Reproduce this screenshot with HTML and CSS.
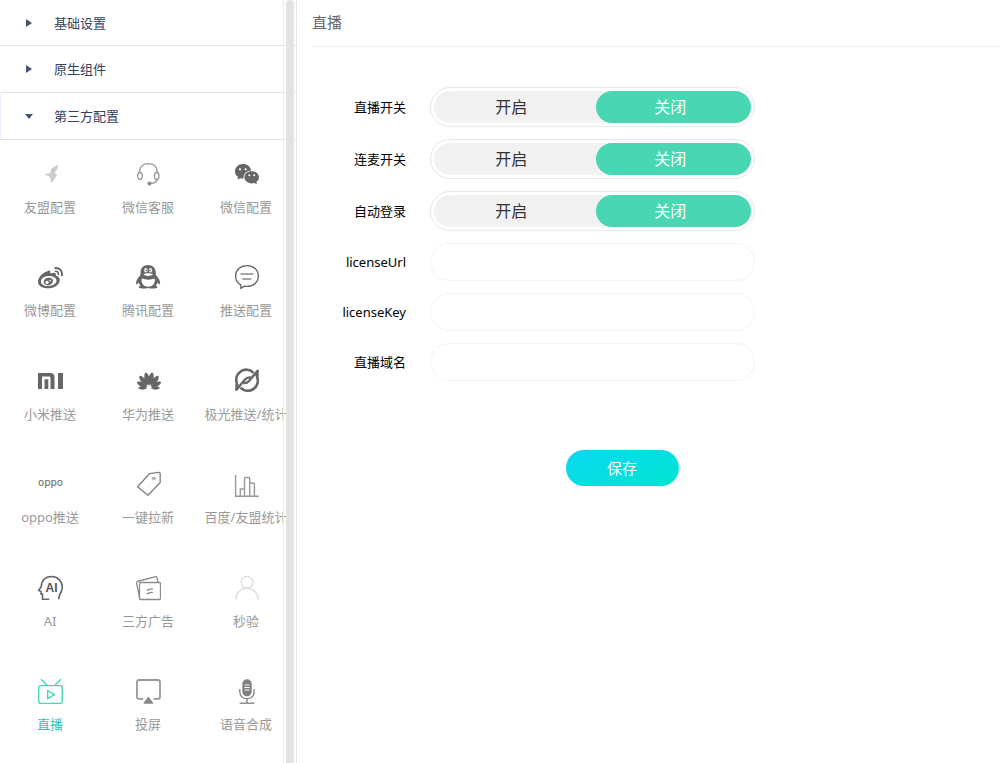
FILE: index.html
```html
<!DOCTYPE html>
<html lang="zh-CN">
<head>
<meta charset="utf-8">
<meta name="viewport" content="width=device-width, initial-scale=1">
<title>直播</title>
<link rel="stylesheet" href="styles.css">
</head>
<body>
<div class="layout">
  <nav class="sidebar">
    <button class="group" type="button" aria-expanded="false"><span class="caret"></span>基础设置</button>
    <button class="group" type="button" aria-expanded="false"><span class="caret"></span>原生组件</button>
    <button class="group group-open" type="button" aria-expanded="true"><span class="caret"></span>第三方配置</button>
    <div class="tiles">
      <a class="tile" href="#">
        <svg class="icon" viewBox="0 0 26 26"><path fill="#ccc" d="M21.500 3.500 14.500 7.500 13.500 12 7 13.300 12 15.300 13.500 17.500 14.500 22 17 19 20 14 17.500 12 20 8.500Z"/></svg>友盟配置</a>
      <a class="tile" href="#">
        <svg class="icon" viewBox="0 0 26 26"><g fill="none" stroke="#999" stroke-width="1.300"><path d="M4.400 12C4.400 5.500 8 2.600 13.400 2.600S22.300 5.500 22.300 12M22.300 18.500C21.800 21 19 22.300 15 22.500"/><ellipse cx="5" cy="15" rx="2.300" ry="3.500"/><ellipse cx="21.700" cy="15" rx="2.300" ry="3.500"/></g><ellipse cx="14.500" cy="22.500" rx="2" ry="1.900" fill="#888"/></svg>微信客服</a>
      <a class="tile" href="#">
        <svg class="icon" viewBox="0 0 26 26"><g fill="#666"><path d="M10 3C5.300 3 2 6.300 2 10.400c0 2.500 1.200 4.300 3.100 5.700L4.400 18.600 7.500 17.200c.9.3 2 .4 3.100.4C10 12.800 14 9.600 18.200 9.500 17.600 5.700 14.200 3 10 3Z"/><path d="M18.700 10.300c-4.200 0-7.300 2.700-7.300 6s3.100 6.100 7.300 6.100c.9 0 1.700-.1 2.500-.4l2.800 1.300-.7-2.300c1.700-1.200 2.700-2.700 2.700-4.700 0-3.300-3.200-6-7.300-6Z"/></g><g fill="#fff"><circle cx="7" cy="8.300" r="1.100"/><circle cx="12.700" cy="8.300" r="1.100"/><circle cx="16.300" cy="14.300" r="1"/><circle cx="21.200" cy="14.300" r="1"/></g></svg>微信配置</a>

      <a class="tile" href="#">
        <svg class="icon" viewBox="0 0 26 26"><path fill="#666" fill-rule="evenodd" d="M10 7.500C12 5.500 14 6.500 13.200 9.700c3-1.300 6.500-1.500 5.600 1.800 2.700.8 4 2.200 4 4.400 0 4.500-5.600 8.400-12 8.400C5 24.300 1 21.500 1 17.700 1 14 5.500 8.500 10 7.500ZM11.200 12C6.700 12.300 3.700 14.800 3.900 17.700s3.600 4.700 8.100 4.300 7.800-3 7.500-5.700-4-4.600-8.300-4.300Z"/><path fill="#666" fill-rule="evenodd" d="M11.500 13.700c-3.200.3-5.200 2.500-4.700 4.800s3 3.200 5.600 2.500 4.100-3 3.400-5-2.300-2.500-4.300-2.300ZM10 16.700a1.700 1.700 0 1 0 .1 3.400 1.700 1.700 0 0 0-.1-3.400Zm3-.9a.8.8 0 1 0 0 1.600.8.8 0 0 0 0-1.600Z"/><g fill="none" stroke="#666" stroke-linecap="round"><path stroke-width="1.900" d="M18.300 4c4.300-.3 7.500 3 6.500 7.300"/><path stroke-width="1.600" d="M18.500 7.300c2-.1 3.300 1.300 2.900 3.200"/></g></svg>微博配置</a>
      <a class="tile" href="#">
        <svg class="icon" viewBox="0 0 26 26"><path fill="#666" d="M13 1C8.500 1 5.500 4 5.500 8.500v2.600C3 13.500 1.200 16.500 1 19.300c0 1.500 1 1.300 2.600-.8.4 1.200 1 2.200 2 3.100-1.600.8-2 1.500-1.600 2.200.5.900 6.400 1.200 9 .2 2.700 1 8.700.7 9.300-.2.400-.7-.1-1.400-1.600-2.200 1-.9 1.600-1.900 2-3.100 1.500 2.100 2.500 2.300 2.500.8-.1-2.800-1.800-5.800-4.400-8.200V8.500C20.800 4 17.600 1 13 1Z"/><path fill="#fff" d="M6.700 14.500c4 1.500 9 1.500 13 0 .8 4-1.500 8.300-6.500 8.300s-7.200-4.300-6.500-8.300Z"/><g fill="#fff"><ellipse cx="10.900" cy="6.200" rx="1.600" ry="2.200"/><ellipse cx="15.500" cy="6.200" rx="1.600" ry="2.200"/><path d="M8.500 10.300c2.500-1.300 7-1.300 9.500 0-2 2.100-7.500 2.100-9.500 0Z"/></g><circle cx="11.300" cy="6.400" r=".8" fill="#666"/><circle cx="15" cy="6.400" r=".8" fill="#666"/></svg>腾讯配置</a>
      <a class="tile" href="#">
        <svg class="icon" viewBox="0 0 26 26"><g fill="none" stroke="#666" stroke-width="1.300" stroke-linejoin="round"><path d="M14 1.600C7.300 1.600 2.600 6 2.600 12c0 4 2 7.100 5.200 8.900v3.500l3.600-2.300c.8.2 1.700.3 2.600.3 6.700 0 11.400-4.500 11.400-10.400S20.700 1.600 14 1.600Z"/><path stroke="#888" d="M7.500 10h13M9.300 15h9"/></g></svg>推送配置</a>

      <a class="tile" href="#">
        <svg class="icon" viewBox="0 0 26 26"><path fill="#666" d="M1 5h12.500c2.500 0 4 1.500 4 4v12h-4V10.300c0-1.300-.5-1.900-1.900-1.900H5V21H1ZM7.500 11.300h3.800V21H7.500ZM21 5h5v16h-5Z"/></svg>小米推送</a>
      <a class="tile" href="#">
        <svg class="icon" viewBox="0 0 26 26"><defs><path id="petal" d="M0-2.500C-3-7-3.300-12-.8-15.500Q0-16 .8-15.500C3.300-12 3-7 0-2.500Z"/></defs><g fill="#666" transform="translate(14 20)"><use href="#petal" transform="rotate(-12)"/><use href="#petal" transform="rotate(12)"/><use href="#petal" transform="rotate(-38) scale(.96)"/><use href="#petal" transform="rotate(38) scale(.96)"/><use href="#petal" transform="rotate(-64) scale(.84)"/><use href="#petal" transform="rotate(64) scale(.84)"/><use href="#petal" transform="rotate(-90) scale(.68)"/><use href="#petal" transform="rotate(90) scale(.68)"/></g></svg>华为推送</a>
      <a class="tile" href="#">
        <svg class="icon" viewBox="0 0 26 26"><g fill="none" stroke="#666"><path stroke-width="2.600" d="M4 15.500A10 10 0 0 1 20.500 4.800M24 8.800A10 10 0 0 1 7.500 19.600"/><path stroke-width="2.400" d="M2.800 22.500 12 11.500Q14.500 8.800 17.500 9.500M25.200 2 16 13Q13.500 15.700 10.500 15"/></g><path fill="#666" d="M2.300 16 4.500 14.500 6 17.500 2.300 23ZM25.700 8.500 23.500 10 22 7 25.700 1.500Z"/></svg>极光推送/统计</a>

      <a class="tile" href="#">
        <svg class="icon" viewBox="0 0 26 26"><text class="logo-oppo" x="13.500" y="15" text-anchor="middle">oppo</text></svg>oppo推送</a>
      <a class="tile" href="#">
        <svg class="icon" viewBox="0 0 26 26"><g fill="none" stroke="#808080" stroke-width="1.300" stroke-linejoin="round"><path d="M14.500 2.700 23.500 1.400Q25.200 1.300 25.200 3V11.500L13 24.300 2.500 15.700Z"/><ellipse cx="18.900" cy="7.300" rx="1.500" ry="1" stroke="#aaa"/></g></svg>一键拉新</a>
      <a class="tile" href="#">
        <svg class="icon" viewBox="0 0 26 26"><g fill="none" stroke="#999" stroke-width="1.400"><path d="M2.600 4V25.300H26M7.300 25V18h4.200M11.500 25V7.500q0-1 1-1h3.200q1 0 1 1V25M16.700 12h3.700q1 0 1 1V25"/></g></svg>百度/友盟统计</a>

      <a class="tile" href="#">
        <svg class="icon" viewBox="0 0 26 26"><path fill="none" stroke="#666" stroke-width="1.600" d="M12.300 24.300H5.500V19H4V16.500L1.700 15.500 4.300 11.500C4.300 5.500 8.500 1.500 14.300 1.500c6.500 0 11 4.700 11 10.500 0 3.500-1.300 5.500-2.500 7.500-.8 1.500-1 3-1 4.800"/><text class="logo-ai" x="14.500" y="17" text-anchor="middle">AI</text></svg>AI</a>
      <a class="tile" href="#">
        <svg class="icon" viewBox="0 0 26 26"><g fill="none" stroke="#8c8c8c" stroke-width="1.300" stroke-linejoin="round"><rect x="4.500" y="7.500" width="21" height="17" rx="1"/><path d="M4.500 22.500 1.500 7.800Q1.300 6.800 2.200 6.500L20.500 1.600Q21.600 1.400 21.900 2.300L23.300 7.500M11.500 15c2 .8 3-2 6.500-1M11.500 18.500c2 .8 3-2 6.500-1"/></g></svg>三方广告</a>
      <a class="tile" href="#">
        <svg class="icon" viewBox="0 0 26 26"><g fill="none" stroke="#ddd" stroke-width="1.300"><circle cx="14" cy="7.300" r="5.900"/><path d="M2.600 24.800C3 18 7.500 13.300 14 13.300S25 18 25.400 24.800"/></g></svg>秒验</a>

      <a class="tile tile-active" href="#" aria-current="page">
        <svg class="icon" viewBox="0 0 26 26"><g fill="none" stroke="#49d6b3" stroke-width="1.400" stroke-linejoin="round"><rect x="1.700" y="7.600" width="23.600" height="17.800" rx="2"/><path d="M4 1.300 10.500 7.500M24 1.300 17.500 7.500M10.700 12.500V20.700L17.500 16.600Z"/></g></svg>直播</a>
      <a class="tile" href="#">
        <svg class="icon" viewBox="0 0 26 26"><path fill="none" stroke="#999" stroke-width="1.800" d="M8.300 20.800H4q-2 0-2-2V4q0-2 2-2H23q2 0 2 2V18.800q0 2-2 2H18.500"/><path fill="#888" d="M13.400 18.500 18 24.500V25.700H8.800V24.500Z"/></svg>投屏</a>
      <a class="tile" href="#">
        <svg class="icon" viewBox="0 0 26 26"><rect x="9.300" y="1.300" width="9.400" height="17" rx="4.700" fill="#808080"/><g fill="none" stroke="#808080" stroke-width="1.300"><path d="M6.800 11V13.500c0 4.500 3 7.200 7.200 7.200s7.200-2.700 7.200-7.200V11M14 20.700V25"/><path d="M6.700 25.200H21.300"/><path stroke="#fff" stroke-width="1" d="M11.500 7h5M11.500 9.500h5M11.500 12h5"/></g></svg>语音合成</a>
    </div>
    <div class="scroll-thumb"></div>
  </nav>

  <main class="content">
    <h1 class="title">直播</h1>
    <form class="form">
      <div class="row" role="radiogroup" aria-labelledby="live-label">
        <span class="label" id="live-label">直播开关</span>
        <div class="toggle">
          <div class="track">
            <input class="radio" type="radio" name="live" id="live-on"><label class="option" for="live-on">开启</label>
            <input class="radio" type="radio" name="live" id="live-off" checked><label class="option" for="live-off">关闭</label>
          </div>
        </div>
      </div>
      <div class="row" role="radiogroup" aria-labelledby="mic-label">
        <span class="label" id="mic-label">连麦开关</span>
        <div class="toggle">
          <div class="track">
            <input class="radio" type="radio" name="mic" id="mic-on"><label class="option" for="mic-on">开启</label>
            <input class="radio" type="radio" name="mic" id="mic-off" checked><label class="option" for="mic-off">关闭</label>
          </div>
        </div>
      </div>
      <div class="row" role="radiogroup" aria-labelledby="login-label">
        <span class="label" id="login-label">自动登录</span>
        <div class="toggle">
          <div class="track">
            <input class="radio" type="radio" name="login" id="login-on"><label class="option" for="login-on">开启</label>
            <input class="radio" type="radio" name="login" id="login-off" checked><label class="option" for="login-off">关闭</label>
          </div>
        </div>
      </div>
      <div class="row">
        <label class="label" for="license-url">licenseUrl</label>
        <input class="field" type="text" id="license-url">
      </div>
      <div class="row">
        <label class="label" for="license-key">licenseKey</label>
        <input class="field" type="text" id="license-key">
      </div>
      <div class="row">
        <label class="label" for="domain">直播域名</label>
        <input class="field" type="text" id="domain">
      </div>
      <button class="save" type="submit">保存</button>
    </form>
  </main>
</div>
</body>
</html>
```
FILE: styles.css
```css
* {
  box-sizing: border-box;
}

body {
  margin: 0;
  background: #fff;
  color: #000;
  font-family: "Noto Sans", "Noto Sans CJK SC", sans-serif;
  font-size: 13px;
  font-weight: 400;
  line-height: 20px;
}

button,
input {
  font: inherit;
}

.layout {
  display: flex;
  min-height: 100vh;
}

.sidebar {
  position: relative;
  flex: none;
  width: 297px;
  border-right: 1px solid #e5e5e5;
  overflow: hidden;
}

.sidebar::before {
  content: "";
  position: absolute;
  top: 0;
  bottom: 0;
  left: 283px;
  width: 1px;
  background: #eee;
}

.group {
  display: flex;
  align-items: center;
  width: 100%;
  height: 47px;
  padding: 0 0 0 24px;
  border: 0;
  border-left: 1px solid #fff;
  border-bottom: 1px solid #e2e2e2;
  background: none;
  color: #33415f;
  text-align: left;
}

.group:first-child {
  height: 46px;
}

.group-open {
  border-left-color: #e8f1ff;
}

.caret {
  width: 6px;
  margin: 0 22px 0 1px;
  border-top: 4px solid transparent;
  border-bottom: 4px solid transparent;
  border-left: 6px solid #43546f;
}

.group-open .caret {
  width: 8px;
  margin: 0 21px 0 0;
  border-top: 5px solid #43546f;
  border-right: 4px solid transparent;
  border-bottom: 0;
  border-left: 4px solid transparent;
}

.tiles {
  display: grid;
  grid-template-columns: repeat(3, 98px);
  grid-template-rows: repeat(3, 103px 104px);
  padding-left: 1px;
}

.tile {
  display: flex;
  flex-direction: column;
  align-items: center;
  gap: 10px;
  padding-top: 21px;
  color: #999;
  text-decoration: none;
  white-space: nowrap;
}

.tile-active {
  color: #2cc5b4;
}

.icon {
  flex: none;
  width: 26px;
  height: 26px;
}

.logo-oppo {
  fill: #666;
  font-family: "DejaVu Sans", sans-serif;
  font-size: 10px;
}

.logo-ai {
  fill: #555;
  font-family: "Liberation Sans", sans-serif;
  font-size: 12px;
  font-weight: 700;
}

.scroll-thumb {
  position: absolute;
  top: 0;
  bottom: 0;
  right: 2px;
  width: 8px;
  border-radius: 4px 4px 0 0;
  background: #e3e3e3;
}

.content {
  flex: 1;
  min-width: 0;
  padding-left: 15px;
}

.title {
  margin: 0;
  padding: 12px 0 14px;
  border-bottom: 1px solid #eee;
  color: #666;
  font-size: 15px;
  font-weight: 400;
  line-height: 20px;
}

.form {
  display: flex;
  flex-direction: column;
  gap: 12px;
  max-width: 443px;
  padding-top: 40px;
}

.row {
  display: grid;
  grid-template-columns: 94px 1fr;
  column-gap: 24px;
  align-items: center;
}

.label {
  text-align: right;
}

.toggle {
  padding: 3px;
  border: 1px solid #e8e8e8;
  border-radius: 20px;
}

.track {
  position: relative;
  display: grid;
  grid-template-columns: 1fr 1fr;
  border-radius: 16px;
  background: #f2f2f2;
}

.radio {
  position: absolute;
  opacity: 0;
}

.option {
  padding-right: 4px;
  border-radius: 16px;
  color: #333;
  font-size: 16px;
  line-height: 32px;
  text-align: center;
}

.option:last-child {
  margin-left: 3px;
  padding-right: 6px;
}

.radio:checked + .option {
  background: #49d6b3;
  color: #fff;
}

.field {
  width: 100%;
  height: 38px;
  padding: 0 18px;
  border: 1px solid #f4f4f4;
  border-radius: 19px;
  background: #fff;
}

.save {
  align-self: center;
  width: 113px;
  height: 36px;
  margin: 57px 0 0 177px;
  padding: 0;
  border: 0;
  border-radius: 18px;
  background: linear-gradient(160deg, #0ad8f2, #00e5cf);
  color: #fff;
  font-size: 15px;
}
```
